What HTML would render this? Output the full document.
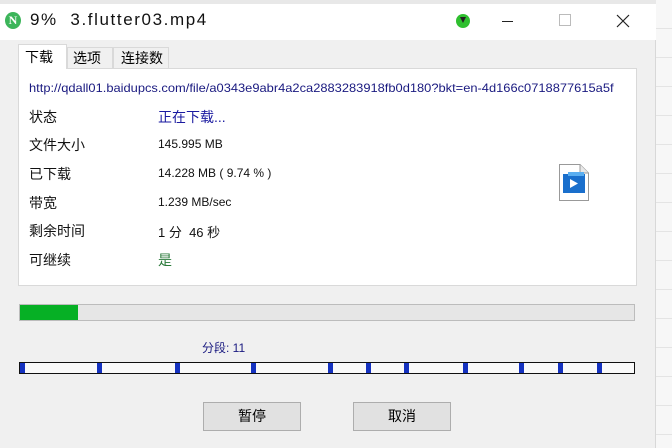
<!DOCTYPE html>
<html><head><meta charset="utf-8"><style>
*{margin:0;padding:0;box-sizing:border-box}
body{width:672px;height:448px;overflow:hidden;background:#f3f3f3;position:relative;font-family:"Liberation Sans","Noto Sans CJK SC",sans-serif;}
.a{position:absolute}
.win{left:0;top:4px;width:656px;height:444px;background:#f0f0f0;border-right:1px solid #d8d8d8}
.title{left:0;top:4px;width:656px;height:36px;background:#fff}
.lbl{font-size:14px;color:#111;left:29px}
.val{font-size:12px;color:#111;left:158px}
.btn{width:98px;height:29px;background:#e1e1e1;border:1px solid #adadad;font-size:14px;text-align:center;line-height:27px;color:#000}
.mk{top:363px;width:5px;height:10px;background:#1532c0}
</style></head><body>
<div class="a" style="left:0;top:0;width:672px;height:4px;background:#e8e8e8"></div>
<div class="a" style="left:656px;top:0;width:16px;height:448px;background:#f7f7f7;background-image:repeating-linear-gradient(#f7f7f7 0 28px,#e4e4e4 28px 29px)"></div>
<div class="a win"></div>
<div class="a title"></div>
<div class="a" style="left:5px;top:12px;width:16px;height:17px;border-radius:50%;background:#3cb55a;color:#fff;font:bold 12px 'Liberation Serif',serif;text-align:center;line-height:17px">N</div>
<div class="a" style="left:30px;top:10px;font-size:17px;color:#111;letter-spacing:1.6px;white-space:nowrap">9%&nbsp; 3.flutter03.mp4</div>
<div class="a" style="left:456px;top:14px;width:14px;height:14px;border-radius:50%;background:#2fbf2f"><div style="position:absolute;left:4px;top:3px;width:0;height:0;border-left:3px solid transparent;border-right:3px solid transparent;border-top:6px solid #222"></div></div>
<div class="a" style="left:502px;top:21px;width:11px;height:1px;background:#222"></div>
<div class="a" style="left:559px;top:14px;width:12px;height:12px;border:1px solid #bbb"></div>
<svg class="a" style="left:616px;top:14px" width="14" height="14"><path d="M1 1L13 13M13 1L1 13" stroke="#222" stroke-width="1.2"/></svg>
<div class="a" style="left:18px;top:68px;width:619px;height:218px;background:#fff;border:1px solid #d9d9d9"></div>
<div class="a" style="left:18px;top:44px;width:49px;height:25px;background:#fff;border:1px solid #d9d9d9;border-bottom:none;font-size:14px;padding:2px 0 0 6px">下载</div>
<div class="a" style="left:67px;top:47px;width:46px;height:21px;background:#f0f0f0;border:1px solid #d9d9d9;border-bottom:none;font-size:14px;padding:0 0 0 5px">选项</div>
<div class="a" style="left:113px;top:47px;width:56px;height:21px;background:#f0f0f0;border:1px solid #d9d9d9;border-bottom:none;font-size:14px;padding:0 0 0 7px">连接数</div>
<div class="a" style="left:29px;top:81px;font-size:12px;color:#1a1a80;white-space:nowrap;transform:scaleX(1.073);transform-origin:0 0">http://qdall01.baidupcs.com/file/a0343e9abr4a2ca2883283918fb0d180?bkt=en-4d166c0718877615a5f</div>
<div class="a lbl" style="top:107px">状态</div><div class="a" style="left:158px;top:107px;font-size:14px;color:#1a1aa0">正在下载...</div>
<div class="a lbl" style="top:135px">文件大小</div><div class="a val" style="top:137px">145.995 MB</div>
<div class="a lbl" style="top:164px">已下载</div><div class="a val" style="top:166px">14.228 MB ( 9.74 % )</div>
<div class="a lbl" style="top:193px">带宽</div><div class="a val" style="top:195px">1.239 MB/sec</div>
<div class="a lbl" style="top:221px">剩余时间</div><div class="a val" style="top:222px;font-size:13px">1 分&nbsp; 46 秒</div>
<div class="a lbl" style="top:250px">可继续</div><div class="a" style="left:158px;top:250px;font-size:14px;color:#2a7a3a">是</div>
<svg class="a" style="left:559px;top:164px" width="30" height="37"><path d="M0.5 0.5H21L29.5 9V36.5H0.5Z" fill="#fff" stroke="#999"/><path d="M21 .5V9H29.5" fill="#e8e8e8" stroke="#999"/><rect x="4" y="10" width="22" height="19" fill="#1a6fcc"/><rect x="9" y="8" width="16" height="4" fill="#5aaef0"/><path d="M11 15L19 19.5 11 24Z" fill="#fff"/></svg>
<div class="a" style="left:19px;top:304px;width:616px;height:17px;background:#e6e6e6;border:1px solid #bcbcbc"></div>
<div class="a" style="left:20px;top:305px;width:58px;height:15px;background:#06b025"></div>
<div class="a" style="left:202px;top:339px;font-size:12px;color:#1a1a80">分段: 11</div>
<div class="a" style="left:19px;top:362px;width:616px;height:12px;background:#fafafa;border:1px solid #111"></div>
<div class="a mk" style="left:20px"></div><div class="a mk" style="left:97px"></div><div class="a mk" style="left:175px"></div><div class="a mk" style="left:251px"></div><div class="a mk" style="left:328px"></div><div class="a mk" style="left:366px"></div><div class="a mk" style="left:404px"></div><div class="a mk" style="left:463px"></div><div class="a mk" style="left:519px"></div><div class="a mk" style="left:558px"></div><div class="a mk" style="left:597px"></div>
<div class="a btn" style="left:203px;top:402px">暂停</div>
<div class="a btn" style="left:353px;top:402px">取消</div>
</body></html>
